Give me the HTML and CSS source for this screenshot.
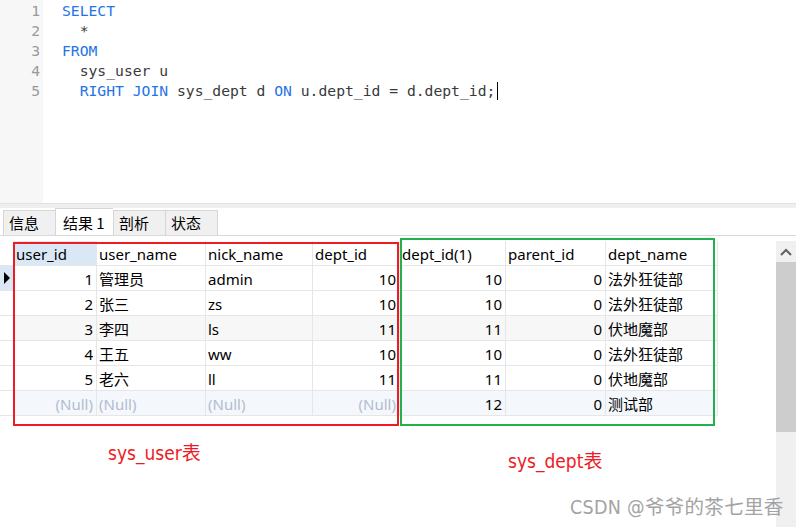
FILE: index.html
```html
<!DOCTYPE html>
<html>
<head>
<meta charset="utf-8">
<link rel="stylesheet" href="styles.css">
</head>
<body>
<div class="app">
  <div class="editor">
    <div class="gutter">
      <div>1</div><div>2</div><div>3</div><div>4</div><div>5</div>
    </div>
    <div class="code">
      <div class="ln"><span class="kw">SELECT</span></div>
      <div class="ln">  *</div>
      <div class="ln"><span class="kw">FROM</span></div>
      <div class="ln">  sys_user u</div>
      <div class="ln">  <span class="kw">RIGHT JOIN</span> sys_dept d <span class="kw">ON</span> u.dept_id = d.dept_id;<span class="caret"></span></div>
    </div>
  </div>
  <div class="sep"></div>
  <div class="tabbar">
    <div class="tab">信息</div>
    <div class="tab active">结果 1</div>
    <div class="tab">剖析</div>
    <div class="tab">状态</div>
  </div>
  <div class="results">
    <div class="gridwrap">
      <div class="grid">
        <div class="row head">
          <div class="ind"></div>
          <div class="c sel">user_id</div><div class="c">user_name</div><div class="c">nick_name</div><div class="c">dept_id</div>
          <div class="c">dept_id(1)</div><div class="c">parent_id</div><div class="c">dept_name</div>
        </div>
        <div class="row">
          <div class="ind cur"><span class="tri"></span></div>
          <div class="c n">1</div><div class="c">管理员</div><div class="c">admin</div><div class="c n">10</div>
          <div class="c n">10</div><div class="c n">0</div><div class="c">法外狂徒部</div>
        </div>
        <div class="row">
          <div class="ind"></div>
          <div class="c n">2</div><div class="c">张三</div><div class="c">zs</div><div class="c n">10</div>
          <div class="c n">10</div><div class="c n">0</div><div class="c">法外狂徒部</div>
        </div>
        <div class="row alt">
          <div class="ind"></div>
          <div class="c n">3</div><div class="c">李四</div><div class="c">ls</div><div class="c n">11</div>
          <div class="c n">11</div><div class="c n">0</div><div class="c">伏地魔部</div>
        </div>
        <div class="row">
          <div class="ind"></div>
          <div class="c n">4</div><div class="c">王五</div><div class="c">ww</div><div class="c n">10</div>
          <div class="c n">10</div><div class="c n">0</div><div class="c">法外狂徒部</div>
        </div>
        <div class="row">
          <div class="ind"></div>
          <div class="c n">5</div><div class="c">老六</div><div class="c">ll</div><div class="c n">11</div>
          <div class="c n">11</div><div class="c n">0</div><div class="c">伏地魔部</div>
        </div>
        <div class="row newrow">
          <div class="ind"></div>
          <div class="c n null">(Null)</div><div class="c null">(Null)</div><div class="c null">(Null)</div><div class="c n null">(Null)</div>
          <div class="c n">12</div><div class="c n">0</div><div class="c">测试部</div>
        </div>
      </div>
      <div class="box red"></div>
      <div class="box green"></div>
      <div class="label l1">sys_user表</div>
      <div class="label l2">sys_dept表</div>
      <div class="watermark">CSDN @爷爷的茶七里香</div>
    </div>
    <div class="vscroll">
      <div class="arrow"><svg width="12" height="8" viewBox="0 0 12 8"><path d="M1 7 L6 2 L11 7" fill="none" stroke="#606060" stroke-width="2"/></svg></div>
      <div class="thumb"></div>
    </div>
  </div>
</div>
</body>
</html>
```
FILE: styles.css
```css
html, body {
  margin: 0;
  padding: 0;
  background: #fff;
}
.app {
  width: 796px;
  height: 527px;
  overflow: hidden;
  display: flex;
  flex-direction: column;
}
.editor {
  height: 203px;
  display: flex;
  flex: none;
  background: #fff;
}
.gutter {
  width: 43px;
  background: #f7f7f7;
  box-sizing: border-box;
  padding: 1px 3px 0 0;
  text-align: right;
  font-family: "DejaVu Sans Mono", monospace;
  font-size: 14.7px;
  line-height: 20px;
  color: #9a9a9a;
}
.code {
  padding: 1px 0 0 19px;
  font-family: "DejaVu Sans Mono", monospace;
  font-size: 14.7px;
  line-height: 20px;
  color: #3a3a3a;
}
.ln {
  white-space: pre;
  height: 20px;
}
.kw { color: #2574e6; }
.caret {
  display: inline-block;
  width: 1px;
  height: 18px;
  background: #000;
  vertical-align: -4px;
  margin-left: 2px;
}
.sep {
  height: 4px;
  flex: none;
  background: #efefef;
  border-top: 1px solid #e2e2e2;
}
.tabbar {
  height: 27px;
  flex: none;
  display: flex;
  align-items: flex-end;
  padding-left: 3px;
  border-bottom: 1px solid #d9d9d9;
  background: #fff;
  font-family: "Noto Sans CJK SC", sans-serif;
  font-size: 15px;
}
.tab {
  height: 25px;
  box-sizing: border-box;
  border: 1px solid #d6d6d6;
  border-bottom: none;
  border-right: none;
  background: #f0f0f0;
  color: #000;
  line-height: 24px;
  padding-left: 5px;
  width: 52px;
}
.tab:last-child { border-right: 1px solid #d6d6d6; width: 53px; }
.tab.active {
  height: 27px;
  background: #fff;
  width: 58px;
  padding-left: 7px;
  line-height: 27px;
}
.results {
  flex: 1;
  display: flex;
}
.gridwrap {
  flex: 1;
  position: relative;
  padding-top: 5px;
}
.grid {
  width: 719px;
  font-family: "Noto Sans", "Noto Sans CJK SC", sans-serif;
  font-size: 15px;
  color: #000;
}
.row {
  display: grid;
  grid-template-columns: 14px 83px 109px 107px 87px 106px 100px 112px;
  height: 25px;
}
.row > div {
  box-sizing: border-box;
  border-bottom: 1px solid #e6e6e6;
  height: 25px;
}
.c {
  border-right: 1px solid #e6e6e6;
  padding: 1px 3px 0 2px;
  line-height: 25px;
  white-space: nowrap;
  overflow: hidden;
}
.c.n { text-align: right; }
.head .c { background: #fff; }
.head .c.sel { background: #dae8f6; }
.alt > .c { background: #f7f7f7; }
.newrow > .c { background: #f4f8fd; }
.null { color: #b3bccd; }
.ind { position: relative; }
.ind.cur { background: #dae8f6; }
.tri {
  position: absolute;
  left: 4px;
  top: 6px;
  width: 0;
  height: 0;
  border-top: 6px solid transparent;
  border-bottom: 6px solid transparent;
  border-left: 6px solid #000;
}
.box {
  position: absolute;
  box-sizing: border-box;
  border: 2px solid;
}
.box.red {
  border-color: #ed1c24;
  left: 13px;
  top: 6px;
  width: 386px;
  height: 184px;
}
.box.green {
  border-color: #22b14c;
  left: 400px;
  top: 2px;
  width: 315px;
  height: 188px;
}
.label {
  position: absolute;
  color: #ed1c24;
  font-family: "Liberation Sans Narrow", "DejaVu Sans Condensed", "Noto Sans CJK SC", sans-serif;
  font-size: 19px;
  line-height: 22px;
  white-space: nowrap;
}
.l1 { left: 108px; top: 206px; }
.l2 { left: 508px; top: 214px; }
.watermark {
  position: absolute;
  left: 570px;
  top: 261px;
  color: #a3a3a3;
  font-family: "Liberation Sans Narrow", "DejaVu Sans Condensed", "Noto Sans CJK SC", sans-serif;
  font-size: 19.5px;
  letter-spacing: 0.3px;
  line-height: 22px;
  white-space: nowrap;
}
.vscroll {
  width: 20px;
  flex: none;
  margin-top: 5px;
  background: #f0f0f0;
  display: flex;
  flex-direction: column;
}
.arrow {
  height: 21px;
  display: flex;
  align-items: center;
  justify-content: center;
}
.thumb {
  height: 170px;
  background: #cdcdcd;
}
```
